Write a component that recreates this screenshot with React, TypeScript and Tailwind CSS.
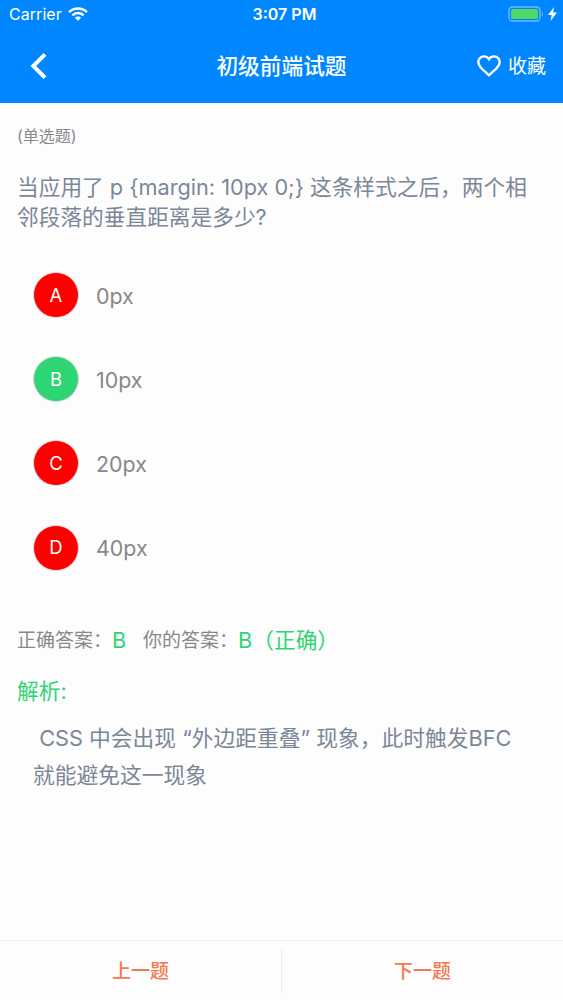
import { useState } from "react";

interface Option {
  key: string;
  label: string;
}

const ANSWER = "B";

const options: Option[] = [
  { key: "A", label: "0px" },
  { key: "B", label: "10px" },
  { key: "C", label: "20px" },
  { key: "D", label: "40px" },
];

function StatusBar() {
  return (
    <div className="grid h-[28px] grid-cols-3 items-center pl-[9px] pr-[6px] text-[16px] leading-none">
      <div className="flex items-center gap-[6px]">
        <span className="tracking-[0.05px]">Carrier</span>
        <svg className="h-[14px] w-[20px]" viewBox="0 0 20 14" fill="none" stroke="currentColor" strokeWidth="2.5">
          <path d="M1.1 5.1a12.6 12.6 0 0 1 17.8 0" />
          <path d="M4.4 8.4a7.9 7.9 0 0 1 11.2 0" />
          <path d="M10 13.8 6.9 10.7a4.4 4.4 0 0 1 6.2 0Z" fill="currentColor" stroke="none" />
        </svg>
      </div>
      <span className="pl-[3px] text-center font-semibold">3:07 PM</span>
      <div className="flex items-center justify-end gap-[4px]">
        <svg className="h-[16px] w-[36px]" viewBox="0 0 36 16" fill="none">
          <rect x="1" y="1" width="31" height="14" rx="3.5" stroke="#73bbff" strokeWidth="1.3" />
          <rect x="3" y="3" width="27" height="10" rx="1.5" fill="#4cd964" />
          <path d="M33.8 5.6v5c1.6-.7 1.6-4.3 0-5Z" fill="#73bbff" />
        </svg>
        <svg className="h-[14px] w-[9px]" viewBox="0 0 9 14" fill="currentColor">
          <path d="M6 0 0 8h3.7L2.6 14 9 5.6H5.2Z" />
        </svg>
      </div>
    </div>
  );
}

export default function App() {
  const [selected, setSelected] = useState(ANSWER);
  const [liked, setLiked] = useState(false);

  return (
    <div className="flex h-[1000px] w-[563px] flex-col bg-[#fdfdfe] font-['Inter','Noto_Sans_CJK_SC',sans-serif] text-[#888]">
      <header className="h-[103px] bg-[#0087ff] text-white">
        <StatusBar />
        <div className="grid h-[75px] grid-cols-3 items-center">
          <button className="ml-[30px] w-[17px]">
            <svg className="h-[28px] w-[17px]" viewBox="0 0 17 28" fill="none" stroke="currentColor" strokeWidth="4">
              <path d="M15 2.3 3.3 14 15 25.7" />
            </svg>
          </button>
          <h1 className="pt-[2px] text-center text-[21.7px] font-medium leading-none">初级前端试题</h1>
          <button
            className="flex items-center justify-end gap-[7px] pr-[17px] text-[19px] leading-none"
            onClick={() => setLiked(!liked)}
          >
            <svg
              className="h-[22px] w-[24px]"
              viewBox="0 0 24 22"
              fill={liked ? "currentColor" : "none"}
              stroke="currentColor"
              strokeWidth="2.4"
            >
              <path d="M12 20.2C4.9 14 1.3 11 1.3 7A5.5 5.5 0 0 1 6.8 1.4C9 1.4 11 2.5 12 4.2 13 2.5 15 1.4 17.2 1.4A5.5 5.5 0 0 1 22.7 7C22.7 11 19.1 14 12 20.2Z" />
            </svg>
            <span className="pt-[2px]">收藏</span>
          </button>
        </div>
      </header>

      <main className="flex-1">
        <p className="pl-[17px] pt-[20px] text-[16px] leading-[26px]">(单选题)</p>
        <p className="pl-[17px] pt-[23px] text-[21.7px] leading-[30px] text-[#7b8797]">
          当应用了 p {"{margin: 10px 0;}"} 这条样式之后，两个相
          <br />
          邻段落的垂直距离是多少?
        </p>

        <ul className="flex flex-col gap-[38.2px] pl-[33px] pt-[40px]">
          {options.map((o) => (
            <li key={o.key} className="flex items-center gap-[17px]">
              <button
                onClick={() => setSelected(o.key)}
                className={`h-[46px] w-[46px] rounded-full border border-[#ddd] pt-[1px] text-[18.5px] text-white ${
                  o.key === ANSWER ? "bg-[#2ed573]" : "bg-[#ff0000]"
                }`}
              >
                {o.key}
              </button>
              <span className="pt-[3px] text-[21.4px] leading-none">{o.label}</span>
            </li>
          ))}
        </ul>

        <div className="mt-[54px] flex h-[32px] items-center pl-[17px] text-[19px] leading-[32px]">
          <span>正确答案：</span>
          <span className="w-[31px] pb-[2px] text-[21.7px] text-[#2ed573]">{ANSWER}</span>
          <span>你的答案：</span>
          <span className="pb-[2px] text-[21.7px] text-[#2ed573]">
            {selected}（{selected === ANSWER ? "正确" : "错误"}）
          </span>
        </div>

        <h2 className="pl-[17px] pt-[18px] text-[21.7px] leading-[32px] text-[#2ed573]">解析:</h2>
        <p className="whitespace-pre-wrap pl-[33px] pt-[13px] text-[21.75px] leading-[37px] text-[#7b8797]">
          {" CSS 中会出现 “外边距重叠” 现象，此时触发BFC\n就能避免这一现象"}
        </p>
      </main>

      <footer className="flex h-[60px] items-center border-t border-[#eee] text-[19px] font-medium text-[#f5794e]">
        <button className="h-[45px] flex-1 border-r border-[#eee] pt-[3px]">上一题</button>
        <button className="h-[45px] flex-1 pt-[3px]">下一题</button>
      </footer>
    </div>
  );
}
